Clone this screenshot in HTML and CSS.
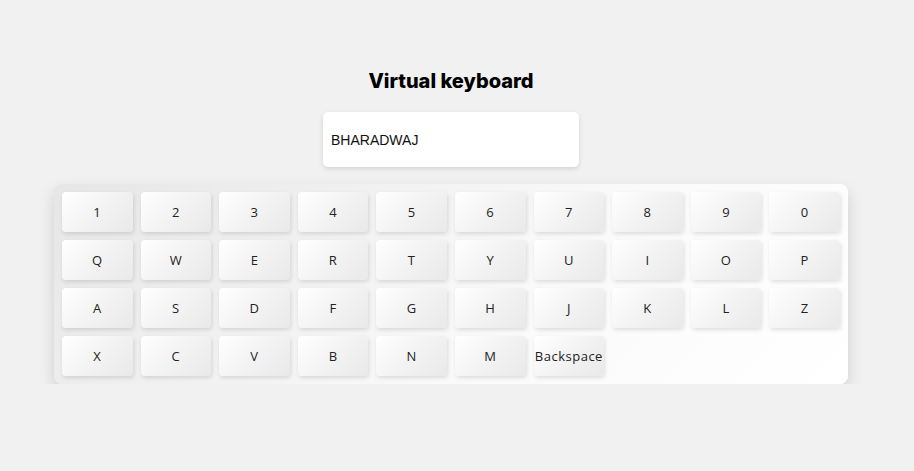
FILE: index.html
```html
<!DOCTYPE html>
<html>
<head>
<meta charset="utf-8">
<link rel="stylesheet" href="styles.css">
</head>
<body>
<div class="page">
  <h1 class="title">Virtual keyboard</h1>
  <div class="display">BHARADWAJ</div>
  <div class="keyboard">
    <button class="key">1</button><button class="key">2</button><button class="key">3</button><button class="key">4</button><button class="key">5</button><button class="key">6</button><button class="key">7</button><button class="key">8</button><button class="key">9</button><button class="key">0</button>
    <button class="key">Q</button><button class="key">W</button><button class="key">E</button><button class="key">R</button><button class="key">T</button><button class="key">Y</button><button class="key">U</button><button class="key">I</button><button class="key">O</button><button class="key">P</button>
    <button class="key">A</button><button class="key">S</button><button class="key">D</button><button class="key">F</button><button class="key">G</button><button class="key">H</button><button class="key">J</button><button class="key">K</button><button class="key">L</button><button class="key">Z</button>
    <button class="key">X</button><button class="key">C</button><button class="key">V</button><button class="key">B</button><button class="key">N</button><button class="key">M</button><button class="key key-wide">Backspace</button>
  </div>
</div>
</body>
</html>
```

FILE: styles.css
```css
html, body {
  margin: 0;
  padding: 0;
  background: #f1f1f1;
}
.page {
  width: 902px;
  display: flex;
  flex-direction: column;
  align-items: center;
  padding-top: 66px;
  font-family: "Open Sans", sans-serif;
}
.title {
  margin: 0;
  font-family: "Inter", sans-serif;
  font-weight: 800;
  font-size: 20px;
  line-height: 30px;
  color: #000;
  letter-spacing: 0;
}
.display {
  margin-top: 16px;
  width: 256px;
  height: 55px;
  box-sizing: border-box;
  background: #fff;
  border-radius: 5px;
  box-shadow: 0 2px 5px rgba(0,0,0,0.12);
  padding-left: 8px;
  display: flex;
  align-items: center;
  font-family: "Liberation Sans", Arial, sans-serif;
  font-size: 14px;
  color: #111;
}
.keyboard {
  margin-top: 17px;
  width: 794px;
  box-sizing: border-box;
  padding: 8px;
  display: grid;
  grid-template-columns: repeat(10, 1fr);
  gap: 8px;
  border-radius: 8px;
  background: linear-gradient(135deg, #e6e6e6 0%, #fafafa 60%, #ffffff 100%);
  box-shadow: 0 7px 16px rgba(0,0,0,0.14);
}
.key {
  height: 40px;
  border: none;
  padding: 0;
  border-radius: 4px;
  background: linear-gradient(135deg, #ffffff 0%, #f3f3f3 50%, #e9e9e9 100%);
  box-shadow: 1px 2px 4px rgba(0,0,0,0.12);
  font-family: "Open Sans", sans-serif;
  font-size: 13px;
  letter-spacing: 0.5px;
  color: #222;
  white-space: nowrap;
  display: flex;
  align-items: center;
  justify-content: center;
}
.key-wide {
  overflow: visible;
}
```
